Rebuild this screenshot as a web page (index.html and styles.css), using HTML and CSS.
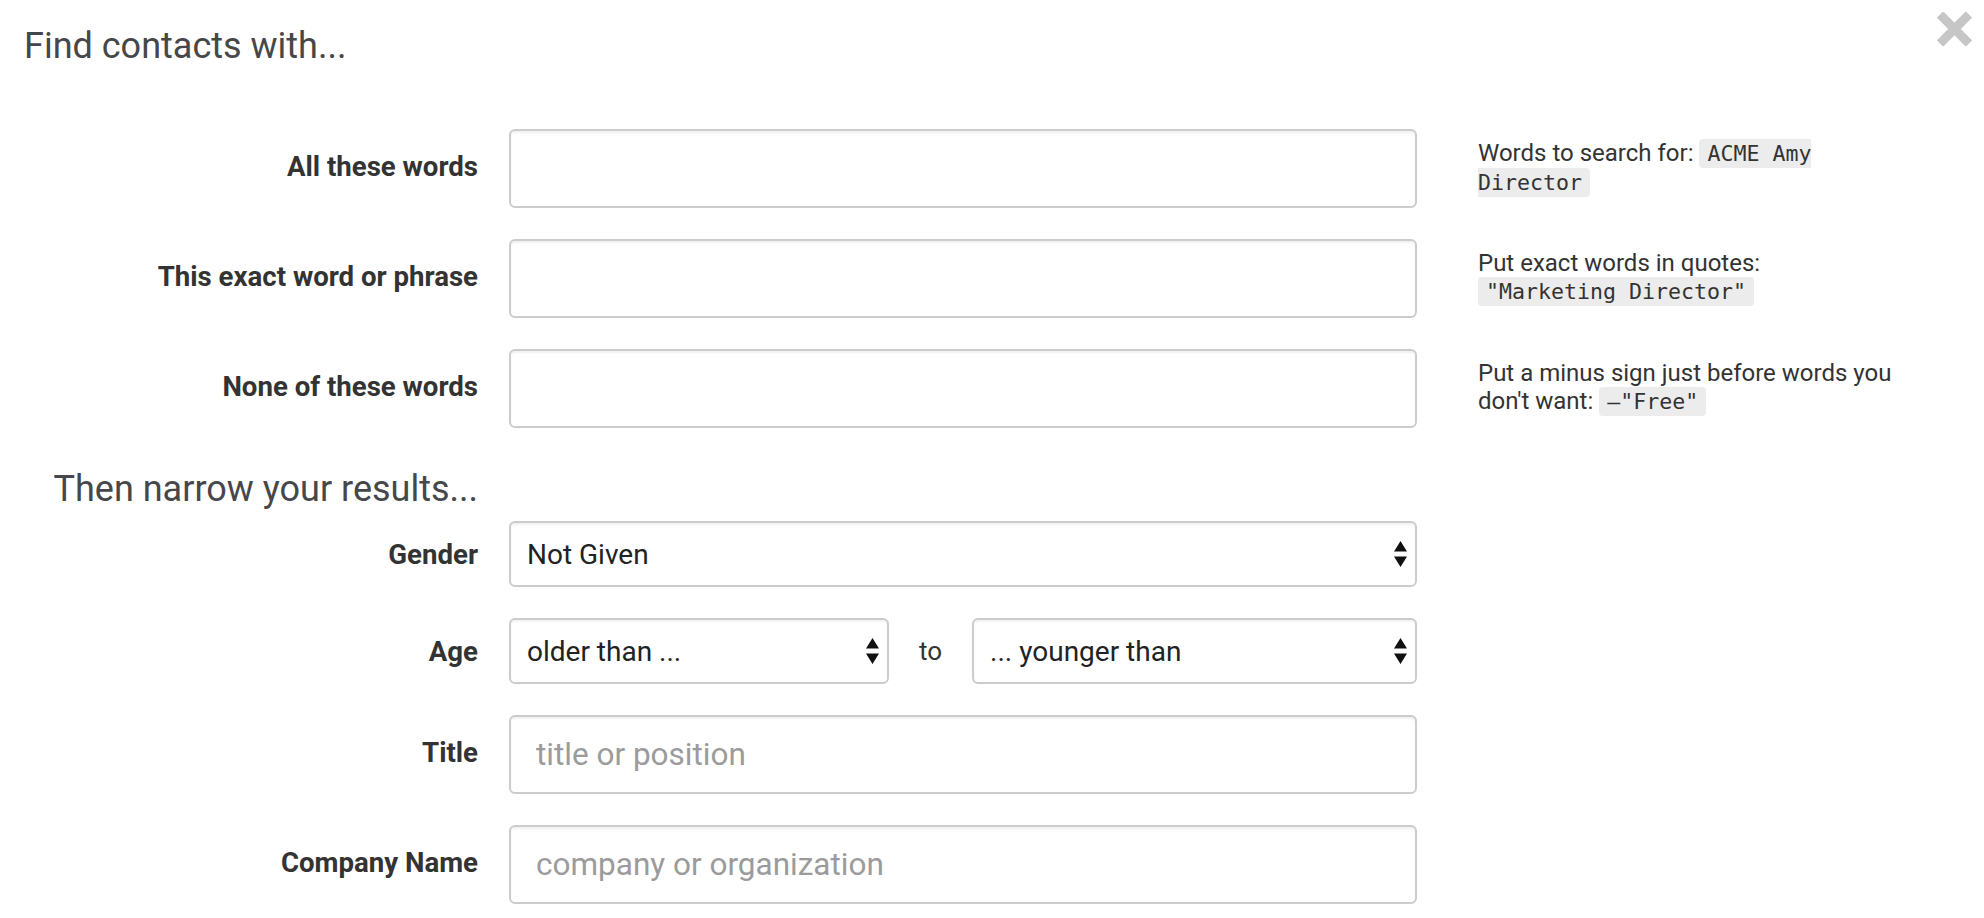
FILE: index.html
```html
<!DOCTYPE html>
<html lang="en">
<head>
<meta charset="utf-8">
<title>Find contacts</title>
<link rel="stylesheet" href="styles.css">
</head>
<body>
<div class="modal">
  <header class="modal-header">
    <h3 class="modal-title">Find contacts with...</h3>
    <button class="close" type="button" aria-label="Close">
      <svg width="35" height="34" viewBox="0 0 35 34">
        <rect x="-3" y="12.5" width="41" height="9" fill="#c6c6c6" transform="rotate(45 17.5 17)"/>
        <rect x="-3" y="12.5" width="41" height="9" fill="#c6c6c6" transform="rotate(-45 17.5 17)"/>
      </svg>
    </button>
  </header>

  <form class="search-form">
    <div class="form-group">
      <label class="control-label">All these words</label>
      <input class="form-control" type="text">
      <p class="help">Words to search for: <code>ACME Amy Director</code></p>
    </div>
    <div class="form-group">
      <label class="control-label">This exact word or phrase</label>
      <input class="form-control" type="text">
      <p class="help">Put exact words in quotes: <code>"Marketing Director"</code></p>
    </div>
    <div class="form-group">
      <label class="control-label">None of these words</label>
      <input class="form-control" type="text">
      <p class="help">Put a minus sign just before words you don't want: <code>–"Free"</code></p>
    </div>

    <div class="form-group section-row">
      <h4 class="section-title">Then narrow your results...</h4>
    </div>

    <div class="form-group select-row">
      <label class="control-label">Gender</label>
      <div class="select-wrap">
        <select class="form-select"><option>Not Given</option></select>
        <svg class="caret" width="13" height="26" viewBox="0 0 13 26"><path d="M0 10.5 L6.5 0 L13 10.5 Z M0 15.5 L13 15.5 L6.5 26 Z" fill="#111"/></svg>
      </div>
    </div>

    <div class="form-group select-row">
      <label class="control-label">Age</label>
      <div class="age-range">
        <div class="select-wrap">
          <select class="form-select"><option>older than ...</option></select>
          <svg class="caret" width="13" height="26" viewBox="0 0 13 26"><path d="M0 10.5 L6.5 0 L13 10.5 Z M0 15.5 L13 15.5 L6.5 26 Z" fill="#111"/></svg>
        </div>
        <span class="to">to</span>
        <div class="select-wrap">
          <select class="form-select"><option>... younger than</option></select>
          <svg class="caret" width="13" height="26" viewBox="0 0 13 26"><path d="M0 10.5 L6.5 0 L13 10.5 Z M0 15.5 L13 15.5 L6.5 26 Z" fill="#111"/></svg>
        </div>
      </div>
    </div>

    <div class="form-group">
      <label class="control-label">Title</label>
      <input class="form-control" type="text" placeholder="title or position">
    </div>
    <div class="form-group">
      <label class="control-label">Company Name</label>
      <input class="form-control" type="text" placeholder="company or organization">
    </div>
  </form>
</div>
</body>
</html>
```

FILE: styles.css
```css
html, body {
  margin: 0;
  padding: 0;
  background: #ffffff;
}

body {
  font-family: Roboto, "Liberation Sans", Arial, sans-serif;
  color: #333333;
  overflow: hidden;
}

.modal-header {
  display: flex;
  justify-content: space-between;
  align-items: flex-start;
  padding: 12px 12px 0 24px;
}

.modal-title {
  margin: 14px 0 0;
  font-size: 36px;
  line-height: 40px;
  font-weight: 400;
  color: #45474a;
}

.close {
  margin: 0;
  padding: 0;
  border: 0;
  background: none;
  width: 35px;
  height: 34px;
  cursor: pointer;
}

.close svg {
  display: block;
}

.search-form {
  margin-top: 63px;
}

.form-group {
  display: grid;
  grid-template-columns: 478px 908px 450px;
  column-gap: 31px;
  align-items: start;
  margin-bottom: 31px;
}

.control-label {
  grid-column: 1;
  text-align: right;
  font-size: 27.6px;
  line-height: 32px;
  font-weight: 700;
  color: #333333;
  padding-top: 22px;
}

.select-row .control-label {
  padding-top: 18px;
}

.form-control {
  grid-column: 2;
  box-sizing: border-box;
  width: 100%;
  height: 79px;
  margin: 0;
  padding: 0 25px;
  border: 2px solid #cccccc;
  border-radius: 6px;
  box-shadow: inset 0 2px 2px rgba(0, 0, 0, 0.06);
  font-family: Roboto, "Liberation Sans", Arial, sans-serif;
  font-size: 31.5px;
  color: #333333;
  background: #ffffff;
  outline: none;
}

.form-control::placeholder {
  color: #9b9b9b;
}

.help {
  grid-column: 3;
  margin: 0 0 0 30px;
  padding-top: 10px;
  font-size: 24px;
  line-height: 28px;
  color: #333333;
}

code {
  font-family: "DejaVu Sans Mono", "Liberation Mono", monospace;
  font-size: 0.9em;
  color: #333333;
  background: #ececec;
  padding: 2px 8px;
  border-radius: 4px;
}

.section-row {
  margin-bottom: 12px;
}

.section-title {
  grid-column: 1;
  margin: 0;
  padding-top: 10px;
  text-align: right;
  font-size: 36px;
  line-height: 40px;
  font-weight: 400;
  color: #45474a;
}

.select-wrap {
  position: relative;
  grid-column: 2;
}

.form-select {
  display: block;
  box-sizing: border-box;
  width: 100%;
  height: 66px;
  margin: 0;
  padding: 0 40px 0 16px;
  border: 2px solid #cccccc;
  border-radius: 6px;
  box-shadow: inset 0 2px 2px rgba(0, 0, 0, 0.05);
  -webkit-appearance: none;
  appearance: none;
  background: #ffffff;
  font-family: Roboto, "Liberation Sans", Arial, sans-serif;
  font-size: 28px;
  color: #222222;
  outline: none;
}

.caret {
  position: absolute;
  right: 10px;
  top: 50%;
  transform: translateY(-50%);
  pointer-events: none;
}

.age-range {
  grid-column: 2;
  display: grid;
  grid-template-columns: 380px auto 1fr;
  column-gap: 30px;
  align-items: center;
}

.age-range .select-wrap {
  grid-column: auto;
}

.to {
  font-size: 26px;
  color: #333333;
}
```
